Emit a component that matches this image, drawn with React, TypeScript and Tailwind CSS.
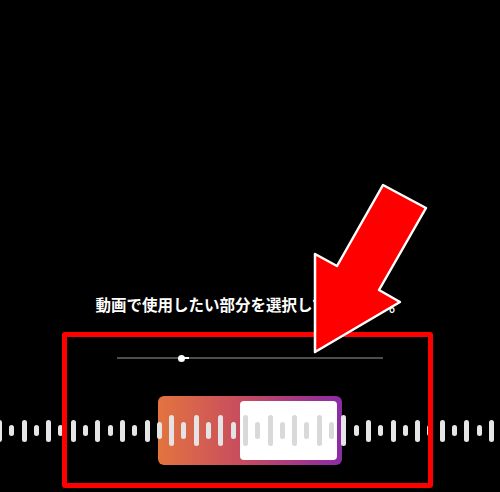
import React from 'react';

// 41 bars, every ~12.3px; bars 13..28 sit in the selected clip and are taller
const BAR_COUNT = 41;

const barHeight = (i: number) => {
  const inClip = i >= 13 && i <= 28;
  if (i % 2 === 0) return inClip ? 31 : 22;
  return inClip ? 17 : 11;
};

const barColor = (i: number) => {
  if (i >= 20 && i <= 27) return 'bg-[#d9d9d9]';
  if (i >= 13 && i <= 19) return 'bg-[#e4e4e4]';
  return 'bg-[#e6e6e6]';
};

const Waveform: React.FC = () => (
  <div className="relative h-[69px] w-full">
    {/* selected clip sits over the wave */}
    <div className="absolute left-[158px] top-0 flex h-[69px] w-[184px] rounded-[6px] bg-[linear-gradient(90deg,#e3743f_0%,#c84c5f_45%,#a63a84_75%,#8a2ca6_100%)] py-[5px] pl-[82px] pr-[5px]">
      <div className="flex-1 rounded-[4px] bg-white" />
    </div>
    <div className="relative ml-[-3px] flex h-full items-center gap-[7.3px]">
      {Array.from({ length: BAR_COUNT }).map((_, i) => (
        <div
          key={i}
          className={`w-[5px] shrink-0 rounded-full ${barColor(i)}`}
          style={{ height: barHeight(i) }}
        />
      ))}
    </div>
  </div>
);

const App: React.FC = () => {
  return (
    <div className="relative h-[492px] w-full overflow-hidden bg-black font-['Noto_Sans_CJK_JP','Noto_Sans',sans-serif]">
      <div className="flex flex-col items-center pt-[295px]">
        <p className="text-[15.5px] font-semibold leading-[18px] text-white">
          動画で使用したい部分を選択してください。
        </p>

        {/* scrub track */}
        <div className="mt-[44px] flex h-[2px] w-[266px] items-center bg-[#4d4d4d] pl-[61px]">
          <div className="h-[7px] w-[7px] shrink-0 rounded-full bg-white" />
          <div className="ml-[-2px] h-[2px] w-[6px] shrink-0 bg-white" />
        </div>

        <div className="mt-[37px] w-full">
          <Waveform />
        </div>
      </div>

      {/* annotation: red frame */}
      <div className="absolute left-[62px] top-[332px] h-[156px] w-[371px] rounded-[3px] border-[5px] border-[#ff0000]" />

      {/* annotation: arrow */}
      <svg className="absolute inset-0" width="500" height="492" viewBox="0 0 500 492">
        <polygon
          points="383,185 426,208 379,290 400,302 315,352 315,254 337,266"
          fill="#ff0000"
          stroke="#ffffff"
          strokeWidth="2.5"
          strokeLinejoin="round"
        />
      </svg>
    </div>
  );
};

export default App;
